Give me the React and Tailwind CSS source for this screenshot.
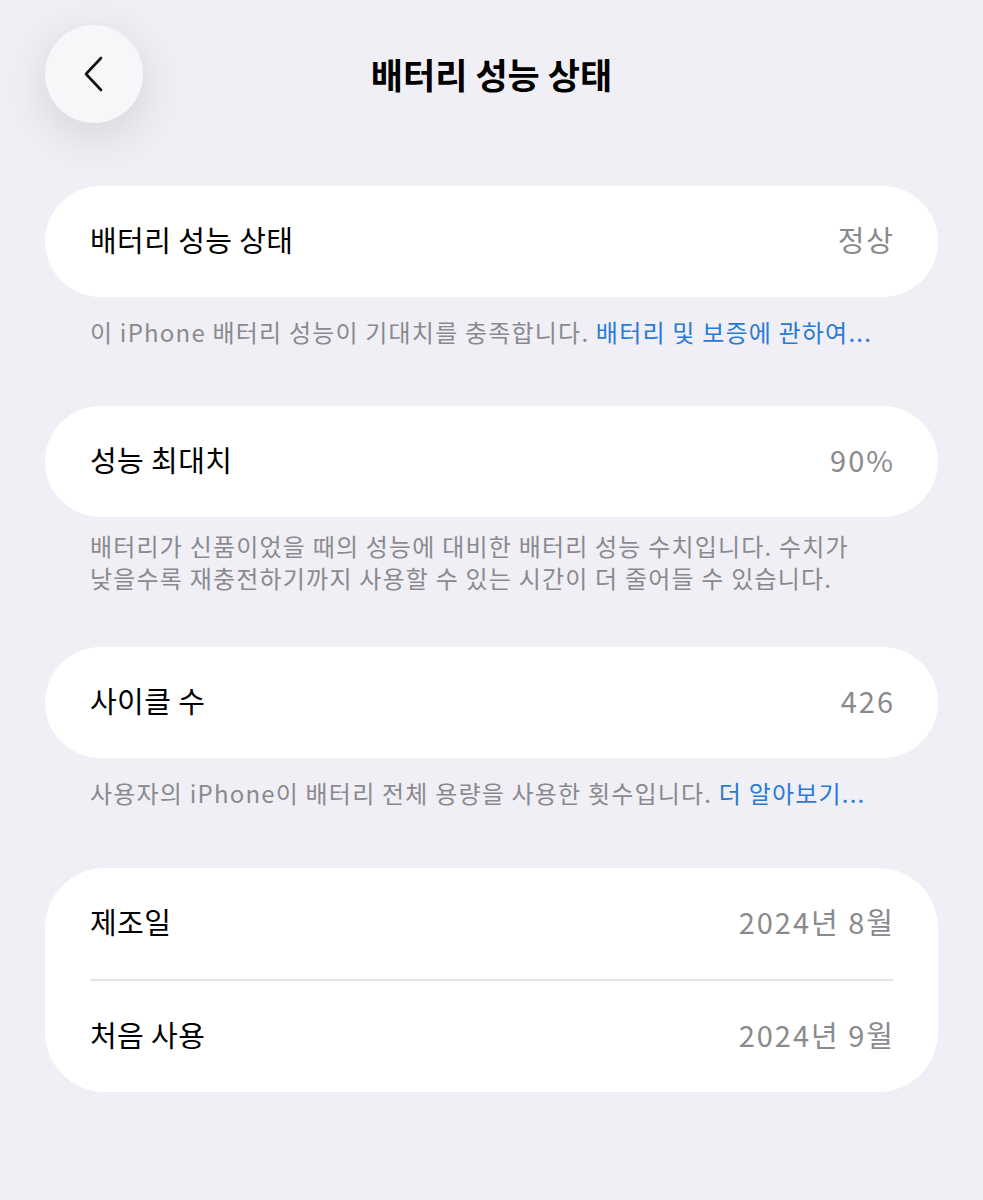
const font = {
  fontFamily: '"Noto Sans CJK KR", "Noto Sans", sans-serif',
};

function Row({ label, value }) {
  return (
    <div className="h-[111px] flex items-center justify-between px-[45px]">
      <span className="text-[29px] text-black tracking-[0.4px] -mt-[3px]">{label}</span>
      <span className="text-[29px] text-[#8a8a8e] tracking-[2px] -mr-[2px] -mt-[3px]">{value}</span>
    </div>
  );
}

function Footer({ children, className }) {
  return (
    <p className={`px-[45px] text-[24px] leading-[32px] text-[#8a8a8e] tracking-[1.2px] whitespace-nowrap ${className}`}>
      {children}
    </p>
  );
}

export default function App() {
  return (
    <div className="min-h-screen bg-[#f0eff5] px-[45px] pt-[25px]" style={font}>
      <div className="grid grid-cols-[98px_1fr_98px] items-center">
        <button className="w-[98px] h-[98px] rounded-full bg-[#f7f7fa] flex items-center justify-center shadow-[0_12px_48px_rgba(0,0,0,0.12)]">
          <svg width="24" height="36" viewBox="0 0 24 36" fill="none">
            <path
              d="M19 2 L4 18 L19 34"
              stroke="#111"
              strokeWidth="2.6"
              strokeLinecap="round"
              strokeLinejoin="round"
            />
          </svg>
        </button>
        <h1 className="text-center text-[35px] font-bold text-black">
          배터리 성능 상태
        </h1>
        <div />
      </div>

      <div className="mt-[63px] bg-white rounded-full">
        <Row label="배터리 성능 상태" value="정상" />
      </div>
      <Footer className="pt-[19px] mb-[58px]">
        이 iPhone 배터리 성능이 기대치를 충족합니다.{" "}
        <span className="text-[#2a7ad5]">배터리 및 보증에 관하여...</span>
      </Footer>

      <div className="bg-white rounded-full">
        <Row label="성능 최대치" value="90%" />
      </div>
      <Footer className="pt-[13px] mb-[53px]">
        배터리가 신품이었을 때의 성능에 대비한 배터리 성능 수치입니다. 수치가
        <br />
        낮을수록 재충전하기까지 사용할 수 있는 시간이 더 줄어들 수 있습니다.
      </Footer>

      <div className="bg-white rounded-full">
        <Row label="사이클 수" value="426" />
      </div>
      <Footer className="pt-[19px] mb-[59px]">
        사용자의 iPhone이 배터리 전체 용량을 사용한 횟수입니다.{" "}
        <span className="text-[#2a7ad5]">더 알아보기...</span>
      </Footer>

      <div className="bg-white rounded-[60px]">
        <Row label="제조일" value="2024년 8월" />
        <div className="mx-[45px] h-[2px] bg-[#e3e3e7]" />
        <Row label="처음 사용" value="2024년 9월" />
      </div>
    </div>
  );
}
